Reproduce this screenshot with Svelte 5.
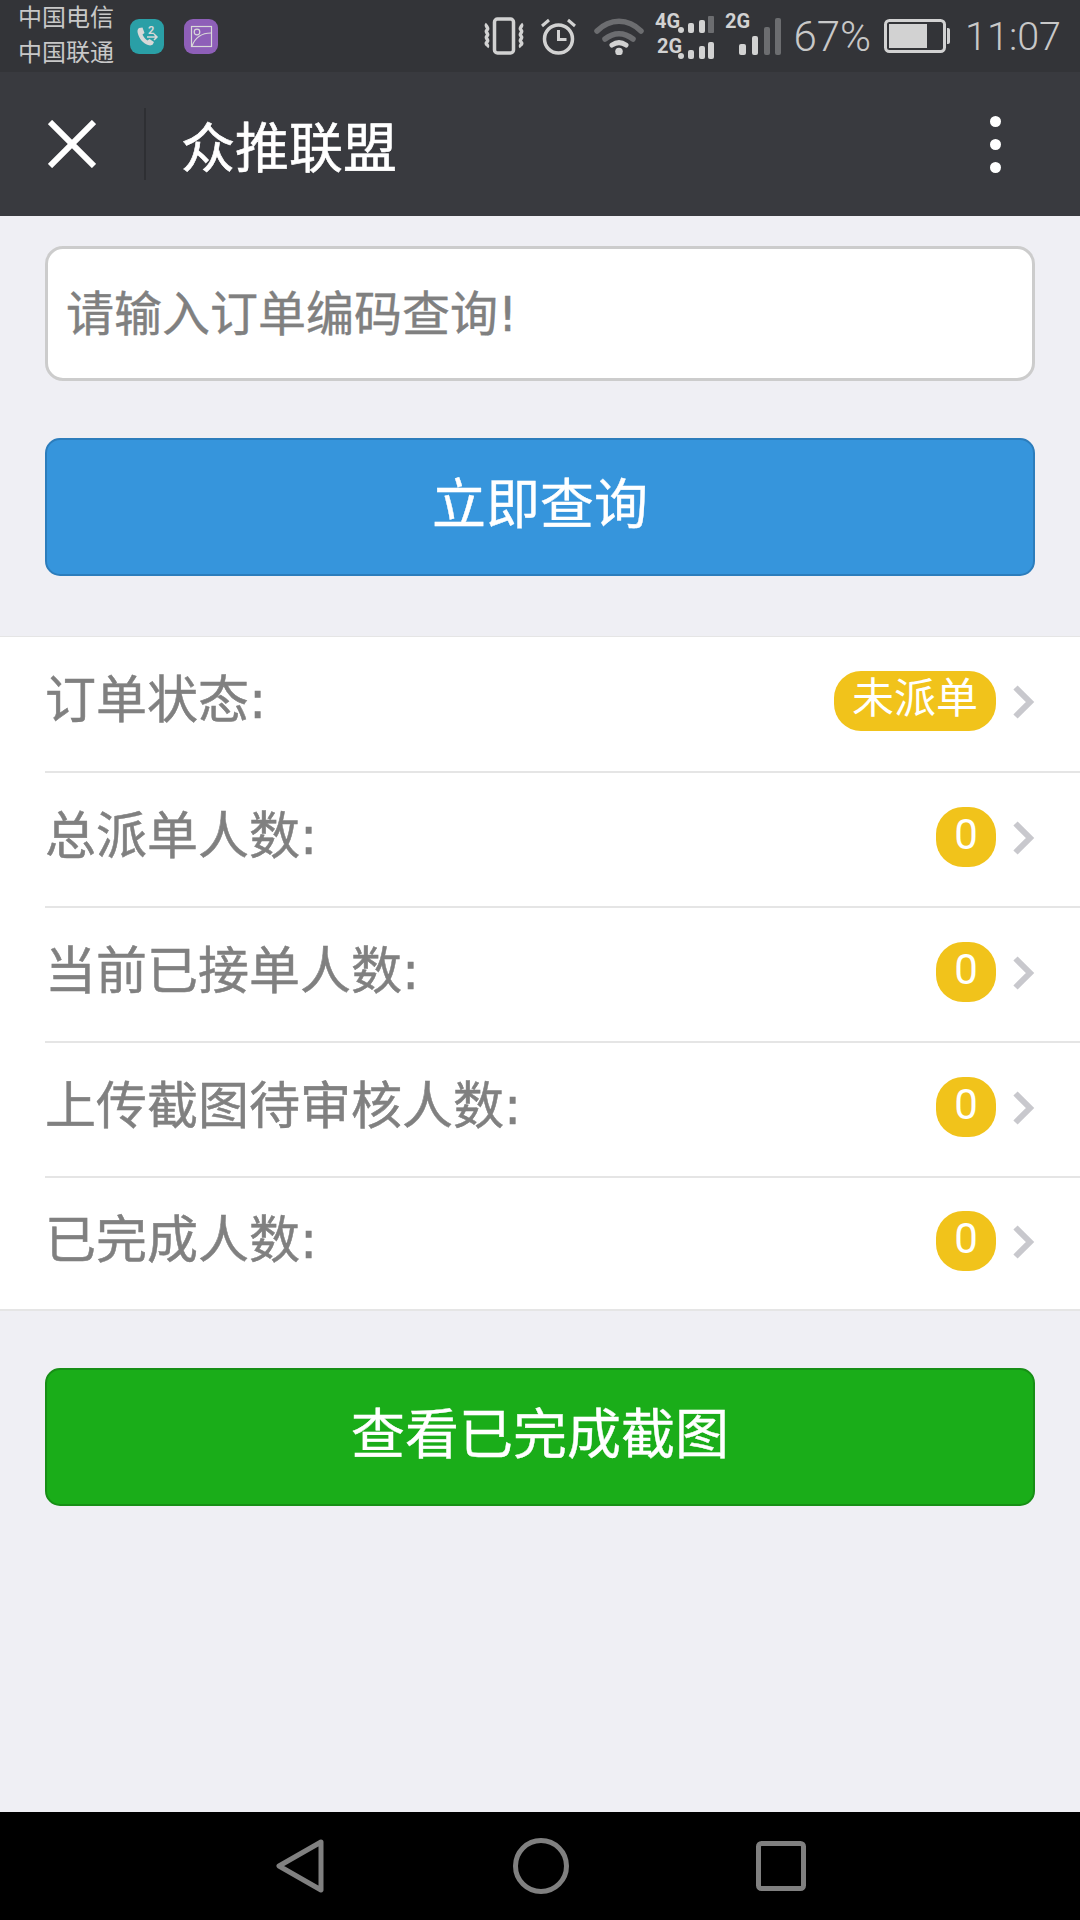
<script>
  const rows = [
    { label: '订单状态:', value: '未派单' },
    { label: '总派单人数:', value: '0' },
    { label: '当前已接单人数:', value: '0' },
    { label: '上传截图待审核人数:', value: '0' },
    { label: '已完成人数:', value: '0' },
  ]
</script>

<div class="page">
  <header class="status">
    <div class="carrier">
      <span>中国电信</span>
      <span>中国联通</span>
    </div>
    <div class="app-icon teal">
      <svg width="34" height="35" viewBox="0 0 34 35">
        <path d="M9 9c-1.500 1-2 3-1 6 1.500 5 5 9 10 11 2 .8 4 .5 5-1l1-2-4.500-3-2 1.500c-2-1-4-3.500-5-6l2-1.500-2-5.500z" fill="#d8d8d8" />
        <text x="18" y="15" class="tiny">2</text>
        <path d="M17 18h10M24 15l3 3-3 3" fill="none" stroke="#d8d8d8" stroke-width="1.500" />
      </svg>
    </div>
    <div class="app-icon purple">
      <svg width="34" height="35" viewBox="0 0 34 35">
        <rect x="7.500" y="7.500" width="20" height="20" fill="none" stroke="#d8d8d8" stroke-width="1.200" />
        <circle cx="13" cy="13" r="2.800" fill="none" stroke="#d8d8d8" stroke-width="1.200" />
        <path d="M8 27c3-8 9-13 19-13" fill="none" stroke="#d8d8d8" stroke-width="1.200" />
      </svg>
    </div>
    <div class="spacer"></div>

    <svg class="sys vibrate" width="40" height="38" viewBox="0 0 40 38">
      <rect x="10.500" y="2" width="19" height="34" rx="3" fill="none" stroke="#d2d2d2" stroke-width="3.500" />
      <path d="M3 7c-2.500 2 2.500 4 0 6s2.500 4 0 6 2.500 4 0 6 2 3 0 5M37 7c2.500 2-2.500 4 0 6s-2.500 4 0 6-2.500 4 0 6-2 3 0 5" fill="none" stroke="#d2d2d2" stroke-width="3.500" />
    </svg>
    <svg class="sys alarm" width="37" height="38" viewBox="0 0 37 38">
      <circle cx="18.500" cy="22" r="14" fill="none" stroke="#d2d2d2" stroke-width="3.500" />
      <path d="M18.500 13v9.500h8" fill="none" stroke="#d2d2d2" stroke-width="3" />
      <path d="M2 9l7-6M35 9l-7-6" fill="none" stroke="#d2d2d2" stroke-width="3" />
    </svg>
    <svg class="sys wifi" width="50" height="38" viewBox="0 0 50 38">
      <path d="M3 14c13-13 31-13 44 0" fill="none" stroke="#6c6d70" stroke-width="5.500" stroke-linecap="round" />
      <path d="M11 22c9-7 19-7 28 0" fill="none" stroke="#6c6d70" stroke-width="5.500" stroke-linecap="round" />
      <path d="M18 28c4.500-3 9.500-3 14 0" fill="none" stroke="#d2d2d2" stroke-width="5" stroke-linecap="round" />
      <circle cx="25" cy="34.500" r="3.800" fill="#d2d2d2" />
    </svg>
    <svg class="sys sim" width="60" height="52" viewBox="0 0 60 52">
      <text x="0" y="18" class="net">4G</text>
      <text x="2" y="43" class="net">2G</text>
      <rect x="23" y="17" width="6" height="6" rx="3" fill="#d2d2d2" />
      <rect x="33" y="13" width="6" height="10" rx="2" fill="#d2d2d2" />
      <rect x="44" y="10" width="6" height="13" rx="2" fill="#d2d2d2" />
      <rect x="53" y="6" width="6" height="17" rx="1" fill="#6c6d70" />
      <rect x="23" y="43" width="6" height="6" rx="3" fill="#d2d2d2" />
      <rect x="33" y="40" width="6" height="9" rx="2" fill="#d2d2d2" />
      <rect x="44" y="36" width="6" height="13" rx="2" fill="#d2d2d2" />
      <rect x="53" y="32" width="6" height="17" rx="2" fill="#d2d2d2" />
    </svg>
    <svg class="sys sim2" width="56" height="52" viewBox="0 0 56 52">
      <text x="0" y="18" class="net">2G</text>
      <rect x="14" y="34" width="7" height="11" rx="2" fill="#d2d2d2" />
      <rect x="27" y="26" width="6" height="19" rx="2" fill="#d2d2d2" />
      <rect x="39" y="17" width="6" height="28" rx="2" fill="#6c6d70" />
      <rect x="50" y="8" width="6" height="37" rx="2" fill="#6c6d70" />
    </svg>
    <span class="pct">67%</span>
    <svg class="sys battery" width="66" height="34" viewBox="0 0 66 34">
      <rect x="1.500" y="1.500" width="59" height="31" rx="4" fill="none" stroke="#d2d2d2" stroke-width="3" />
      <rect x="5" y="5" width="38" height="24" fill="#d2d2d2" />
      <path d="M63 9h1a2 2 0 0 1 2 2v12a2 2 0 0 1-2 2h-1z" fill="#d2d2d2" />
    </svg>
    <span class="time">11:07</span>
  </header>

  <nav class="navbar">
    <svg class="close" width="48" height="48" viewBox="0 0 48 48">
      <path d="M2 2l44 44M46 2L2 46" stroke="#fff" stroke-width="6" fill="none" />
    </svg>
    <div class="divider"></div>
    <h1>众推联盟</h1>
    <div class="dots"><i></i><i></i><i></i></div>
  </nav>

  <main>
    <div class="form">
      <input type="text" placeholder="请输入订单编码查询!" />
      <button class="btn blue">立即查询</button>
    </div>

    <ul class="list">
      {#each rows as row}
        <li>
          <div class="row">
            <span class="label">{row.label}</span>
            <span class="badge">{row.value}</span>
            <svg class="chevron" width="22" height="34" viewBox="0 0 22 34">
              <path d="M2.500 2.500L17 17 2.500 31.500" fill="none" stroke="#c8c8cd" stroke-width="6" />
            </svg>
          </div>
        </li>
      {/each}
    </ul>

    <div class="form">
      <button class="btn green">查看已完成截图</button>
    </div>
  </main>

  <footer class="keys">
    <svg width="50" height="56" viewBox="0 0 50 56">
      <path d="M46 4L4 28l42 24z" fill="none" stroke="#808080" stroke-width="5" stroke-linejoin="round" />
    </svg>
    <svg width="56" height="56" viewBox="0 0 56 56">
      <circle cx="28" cy="28" r="25.500" fill="none" stroke="#808080" stroke-width="5" />
    </svg>
    <svg class="square" width="50" height="50" viewBox="0 0 50 50">
      <rect x="2.500" y="2.500" width="45" height="45" rx="3" fill="none" stroke="#808080" stroke-width="5" />
    </svg>
  </footer>
</div>

<style>
  :global(body) {
    margin: 0;
    background: #efeff4;
  }

  .page {
    width: 1080px;
    height: 1920px;
    display: flex;
    flex-direction: column;
    font-family: Roboto, "Noto Sans CJK SC", sans-serif;
    overflow: hidden;
  }

  .status {
    height: 72px;
    flex: none;
    display: flex;
    align-items: center;
    background: #333438;
    padding: 0 19px 0 18px;
    box-sizing: border-box;
    color: #c8c8c8;
  }
  .carrier {
    display: flex;
    flex-direction: column;
    font-size: 24px;
    line-height: 35px;
    width: 96px;
    margin-right: 16px;
    white-space: nowrap;
  }
  .app-icon {
    width: 34px;
    height: 35px;
    border-radius: 9px;
    margin-right: 20px;
  }
  .app-icon svg {
    display: block;
  }
  .teal {
    background: #2a9fa6;
  }
  .purple {
    background: #8e5fb8;
  }
  .spacer {
    flex: 1;
  }
  .tiny {
    font: 700 11px Roboto, sans-serif;
    fill: #d8d8d8;
  }
  .net {
    font: 700 20px Roboto, sans-serif;
    fill: #d2d2d2;
  }
  .sys {
    flex: none;
    display: block;
  }
  .vibrate {
    margin-right: 16px;
  }
  .alarm {
    margin-right: 17px;
  }
  .wifi {
    margin-right: 11px;
  }
  .sim {
    margin-right: 10px;
  }
  .sim2 {
    margin-right: 12px;
  }
  .pct {
    font-size: 42px;
    font-weight: 300;
    margin-right: 13px;
  }
  .time {
    font-size: 39.5px;
    font-weight: 300;
    margin-left: 15px;
  }

  .navbar {
    height: 144px;
    flex: none;
    display: flex;
    align-items: center;
    background: #393a3f;
    padding-left: 48px;
    padding-right: 79px;
    box-sizing: border-box;
  }
  .divider {
    width: 2px;
    height: 72px;
    background: #2e2f33;
    margin-left: 48px;
    margin-right: 35px;
  }
  .navbar h1 {
    margin: 0;
    flex: 1;
    color: #fff;
    font-size: 54px;
    font-weight: 400;
    -webkit-text-stroke: 0.6px #fff;
  }
  .dots {
    display: flex;
    flex-direction: column;
    gap: 12px;
  }
  .dots i {
    display: block;
    width: 11px;
    height: 11px;
    border-radius: 50%;
    background: #fff;
  }

  main {
    flex: 1;
  }
  .form {
    padding: 30px 45px 0;
    display: flex;
    flex-direction: column;
  }
  input {
    height: 135px;
    box-sizing: border-box;
    border: 3px solid #ccc;
    border-radius: 18px;
    background: #fff;
    padding: 0 18px;
    font-size: 48px;
    font-family: "DejaVu Sans", "Noto Sans CJK SC", sans-serif;
    outline: none;
  }
  input::placeholder {
    color: #808080;
    opacity: 1;
    -webkit-text-stroke: 0.4px #808080;
  }
  .btn {
    height: 138px;
    box-sizing: border-box;
    border-radius: 15px;
    border: 2px solid;
    color: #fff;
    font-size: 54px;
    font-family: inherit;
    padding: 0 0 14px;
    -webkit-text-stroke: 0.4px #fff;
  }
  .blue {
    margin-top: 57px;
    background: #3695dc;
    border-color: #2c7dbc;
  }
  .green {
    margin-top: 27px;
    background: #1aad19;
    border-color: #178f16;
  }

  .list {
    list-style: none;
    margin: 60px 0 0;
    padding: 0;
    background: #fff;
    border-top: 1px solid #e5e5e5;
    border-bottom: 2px solid #e5e5e5;
  }
  .list li {
    padding-left: 45px;
  }
  .list li + li .row {
    border-top: 2px solid #e5e5e5;
  }
  .row {
    height: 135px;
    box-sizing: border-box;
    display: flex;
    align-items: center;
    padding: 0 45px 6px 0;
  }
  .list li:first-child .row {
    height: 134px;
  }
  .list li:last-child .row {
    height: 133px;
  }
  .label {
    flex: 1;
    font-size: 51px;
    color: #808080;
    font-family: "DejaVu Sans", "Noto Sans CJK SC", sans-serif;
    margin-bottom: 10px;
    -webkit-text-stroke: 0.5px #808080;
  }
  .badge {
    min-width: 60px;
    height: 60px;
    line-height: 56px;
    box-sizing: border-box;
    padding: 0 18px;
    border-radius: 27px;
    background: #f1c31b;
    color: #fff;
    font-size: 42px;
    text-align: center;
  }
  .chevron {
    margin-left: 17px;
    margin-top: 2px;
  }

  .keys {
    height: 108px;
    flex: none;
    background: #000;
    display: flex;
    align-items: center;
    justify-content: center;
    gap: 188px;
  }
  .square {
    margin-left: -1px;
  }
</style>
